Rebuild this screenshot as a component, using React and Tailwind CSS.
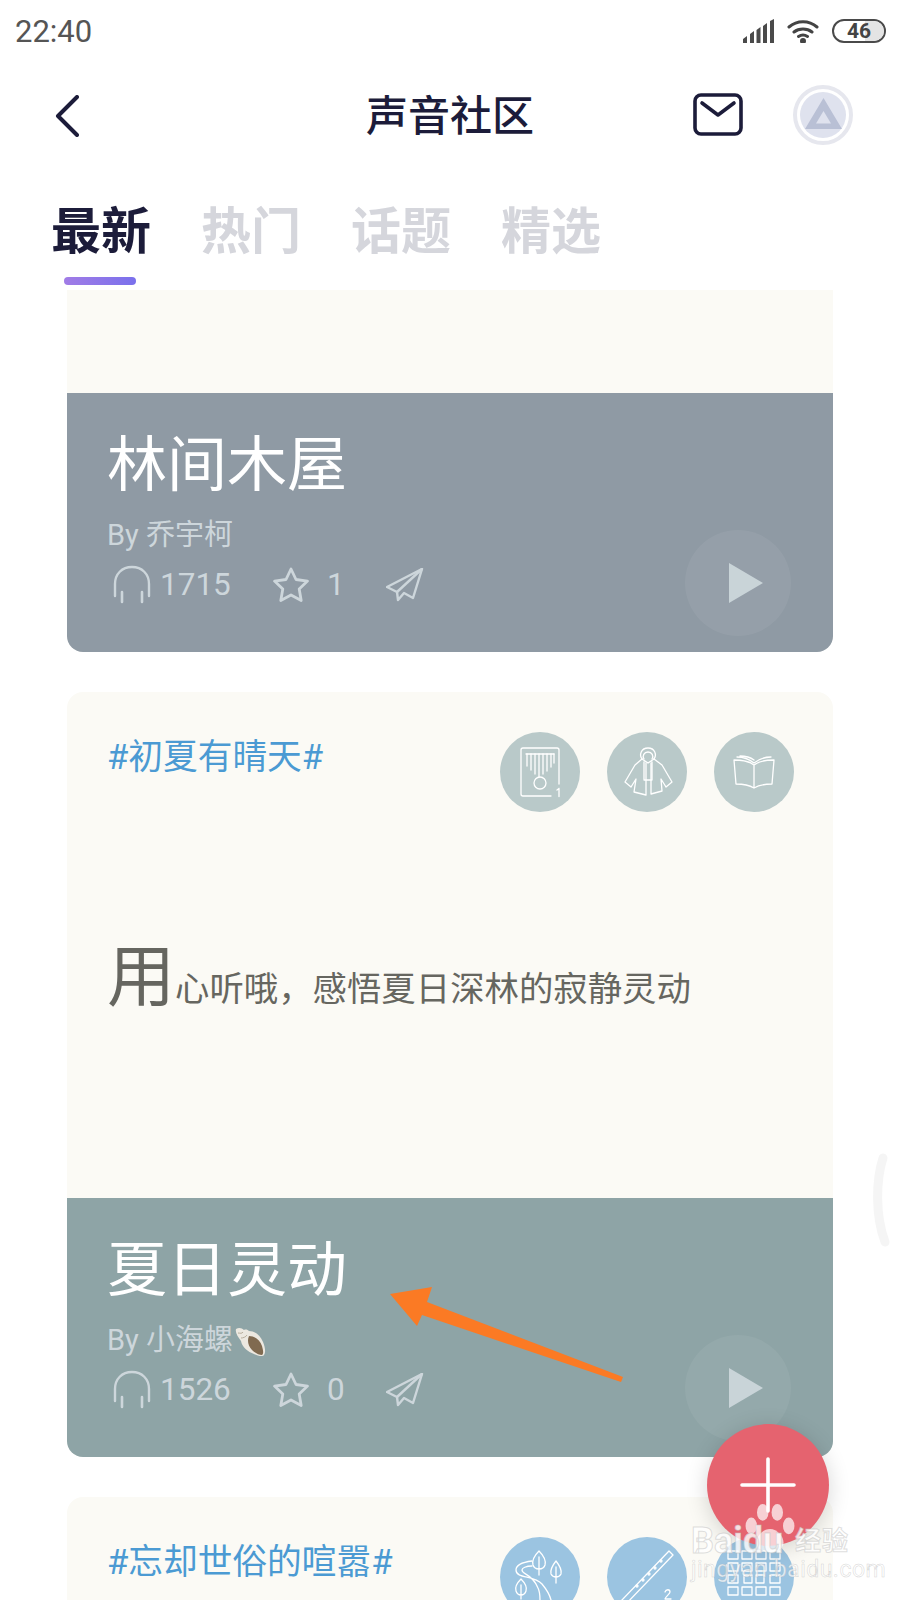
import React from "react";

const Headphones = () => (
  <svg width="38" height="40" viewBox="0 0 38 40" fill="none" stroke="currentColor" strokeWidth="2.400" strokeLinecap="round">
    <path d="M2 31V19C2 9 9 2 19 2s17 7 17 17v12" />
    <path d="M9 27v10M29 27v10" strokeWidth="2.600" />
  </svg>
);
const Star = () => (
  <svg width="38" height="38" viewBox="0 0 38 38" fill="none" stroke="currentColor" strokeWidth="2.800" strokeLinejoin="round">
    <path d="M19 3l5 10.500 11.500 1.600-8.300 8 2 11.400L19 29l-10.200 5.500 2-11.400-8.300-8L14 13.500z" />
  </svg>
);
const Plane = () => (
  <svg width="38" height="34" viewBox="0 0 38 34" fill="none" stroke="currentColor" strokeWidth="2.400" strokeLinejoin="round">
    <path d="M36 1L1 19l10 5 1 8 6-7 9 5z" />
    <path d="M36 1L11 24" />
  </svg>
);

const Kalimba = () => (
  <>
    <path d="M51 64H23a2 2 0 0 1-2-2V18a2 2 0 0 1 2-2h34a2 2 0 0 1 2 2v34" />
    <path d="M26 22h28" />
    <path d="M27 22v12M31 22v16M35 22v20M39 22v23M43 22v20M47 22v17M51 22v13M54 22v9" />
    <circle cx="40" cy="51" r="6" />
    <path d="M59 56.500v8M57 58l2-1.500" />
  </>
);
const Coat = () => (
  <>
    <path d="M35 27c-3-4-1-11 6-11s9 7 6 11" />
    <path d="M37 27c-2-3 0-7 4-7s6 4 4 7" />
    <path d="M35 27l-7 6-10 17 6 5 5-8-2 13 12 3V31M47 27l8 6 10 17-6 5-5-8 1 12-11 3V31" />
    <path d="M37 30v18h8V30M35 27l6 4 6-4" />
  </>
);
const Book = () => (
  <>
    <path d="M40 33c-5-4-13-5-20-5l2 24c7 0 13 1 18 4 5-3 11-4 18-4l2-24c-7 0-15 1-20 5zM40 33v23" />
    <path d="M23 25c6 0 12 2 17 6 5-4 11-6 17-6M26 24c5 0 10 1 14 4" />
  </>
);
const Forest = () => (
  <>
    <path d="M39 14c-5 5-7 10-6 14 1 3 4 4 6 4s5-1 6-4c1-4-1-9-6-14zM39 20v18" />
    <path d="M56 24c-4 5-6 9-5 13 1 2 3 3 5 3s4-1 5-3c1-4-1-8-5-13zM56 30v16" />
    <path d="M21 42c-4 4-6 9-5 12 1 3 3 4 5 4s4-1 5-4c1-3-1-8-5-12zM21 48v14" />
    <path d="M32 24c-8 1-16 3-16 9 0 9 18 5 26 14 5 6 8 12 9 16M32 29c-6 0-10 2-10 4 0 5 10 3 16 18 2 4 2 8 2 12" />
  </>
);
const Flute = () => (
  <>
    <path d="M14 64L62 14l4 4-48 50z" />
    <circle cx="30" cy="49" r="1" /><circle cx="36" cy="43" r="1" /><circle cx="42" cy="37" r="1" /><circle cx="48" cy="31" r="1" /><circle cx="54" cy="24" r="1" />
    <path d="M58 55c1-3 5-3 5 0 0 2-4 4-5 7h6" />
  </>
);
const Panel = () => (
  <>
    <path d="M14 14h10v8H14zM28 14h10v8H28zM42 14h10v8H42zM56 14h10v8H56zM14 26h10v8H14zM28 26h10v8H28zM42 26h10v8H42zM56 26h10v8H56zM14 38h10v8H14zM30 38h8v8h-8zM42 38h8v8h-8zM56 38h10v8H56zM14 50h10v8H14zM28 50h10v8H28zM42 50h10v8H42zM56 50h10v8H56z" />
  </>
);

function Badge({ color, children }) {
  return (
    <div className={`w-[80px] h-[80px] rounded-full shrink-0 ${color}`}>
      <svg width="80" height="80" viewBox="0 0 80 80" fill="none" stroke="white" strokeWidth="1.300" strokeLinejoin="round" strokeLinecap="round">
        {children}
      </svg>
    </div>
  );
}

function CardHead({ topic, color, icons }) {
  return (
    <div className="flex items-start justify-between pt-[40px] pl-[40px] pr-[39px]">
      <div className="text-[34.700px] leading-[50px] text-[#4b9ad3]">{topic}</div>
      <div className="flex gap-[27px]">
        {icons.map((I, i) => (
          <Badge key={i} color={color}><I /></Badge>
        ))}
      </div>
    </div>
  );
}

const Shell = () => (
  <svg className="ml-[2px] mt-[4px]" width="31" height="30" viewBox="0 0 31 30">
    <path d="M1 2c3-2 6-1 8 1 2-1 4 0 5 1 6 0 11 4 14 11 2 5 3 10 1 13-1 2-6 1-10-1-6-2-12-7-13-13C3 10 0 6 1 2z" fill="#ece8e0" />
    <path d="M14 9c6 0 11 4 13 10 1 4 2 7 0 9-3 0-7-2-10-5-4-4-5-10-3-14z" fill="#806a50" />
    <path d="M3 6c2 0 4 1 5-1M6 11c2 0 5-1 6-3" stroke="#b7ad9c" strokeWidth="1" fill="none" />
  </svg>
);

function Band({ color, title, by, shell, plays, stars }) {
  return (
    <div className={`h-[259px] flex justify-between items-end rounded-b-[16px] ${color}`}>
      <div className="pl-[40px] self-start text-[#cdd6db]">
        <div className="pt-[37px] text-[60px] leading-[72px] text-white">{title}</div>
        <div className="mt-[15px] flex items-center h-[36px] text-[29px] leading-[36px]">
          <span>{by}</span>
          {shell && <Shell />}
        </div>
        <div className="mt-[12px] flex items-center h-[40px] text-[31.500px]">
          <div className="ml-[6px] w-[38px]"><Headphones /></div>
          <div className="ml-[9px] w-[112px]">{plays}</div>
          <div className="w-[37px]"><Star /></div>
          <div className="ml-[18px] w-[59px]">{stars}</div>
          <Plane />
        </div>
      </div>
      <div className="mb-[16px] mr-[42px] w-[106px] h-[106px] rounded-full bg-white/[0.06] flex items-center justify-center">
        <svg className="ml-[16px]" width="34" height="40" viewBox="0 0 34 40"><path d="M0 0l34 20L0 40z" fill="#c9d4d8" /></svg>
      </div>
    </div>
  );
}

export default function App() {
  return (
    <div className="relative w-[900px] h-[1600px] overflow-hidden bg-white font-['Roboto','Noto_Sans_CJK_SC',sans-serif]">
      {/* status bar */}
      <div className="h-[62px] flex items-center justify-between pl-[15px] pr-[14px] text-[#555]">
        <span className="text-[31px] leading-none">22:40</span>
        <div className="flex items-center gap-[13px]">
          <svg width="31" height="24" viewBox="0 0 31 24" fill="#4a4a4a">
            <path d="M0 20l4-3v7H0zM7 15l4-3v12H7zM13.500 11l4-3v16h-4zM20 7l4-3v20h-4zM27 2l4-2v24h-4z" />
          </svg>
          <svg width="32" height="24" viewBox="0 0 32 24" fill="none" stroke="#444" strokeWidth="3" strokeLinecap="round">
            <path d="M2 8c8-7 20-7 28 0M7 13c5-4 13-4 18 0M11.500 17.500c3-2 6-2 9 0" />
            <circle cx="16" cy="22" r="1.500" fill="#444" />
          </svg>
          <div className="relative w-[54px] h-[24px] rounded-full border-[2.500px] border-[#4a4a4a] overflow-hidden flex items-center justify-center text-[21px] font-bold text-[#444] leading-none">
            <div className="absolute right-0 top-0 bottom-0 w-[19px] bg-[#e4e4e4]" />
            <span className="relative">46</span>
          </div>
        </div>
      </div>

      {/* nav */}
      <div className="h-[108px] grid grid-cols-[1fr_auto_1fr] items-center pl-[47px] pr-[47px]">
        <svg className="ml-[8px]" width="24" height="42" viewBox="0 0 24 42" fill="none" stroke="#1c1c3a" strokeWidth="4" strokeLinecap="round" strokeLinejoin="round">
          <path d="M22 2L3 21l19 19" />
        </svg>
        <div className="mt-[2px] text-[42px] leading-none font-medium text-[#1c1c3a]">声音社区</div>
        <div className="flex items-start justify-end gap-[50px] -mt-[2px]">
          <svg className="mt-[8px]" width="50" height="43" viewBox="0 0 50 43" fill="none" stroke="#1c1c3a" strokeWidth="3.600" strokeLinejoin="round" strokeLinecap="round">
            <rect x="2" y="2" width="46" height="39" rx="6" />
            <path d="M9 10l16 12 16-12" />
          </svg>
          <div className="w-[60px] h-[60px] rounded-full bg-white border-[4px] border-[#e6e7ee] flex items-center justify-center">
            <div className="w-[46px] h-[46px] rounded-full bg-[#dfe2ee] flex items-start justify-center">
              <svg className="mt-[6px]" width="37" height="31" viewBox="0 0 37 31">
                <path d="M18.500 0L37 31H0z" fill="#b9c0d5" />
                <path d="M18.500 13l7.500 12.500H11z" fill="#dfe2ee" />
              </svg>
            </div>
          </div>
        </div>
      </div>

      {/* tabs */}
      <div className="pt-[32px] pl-[51px] flex gap-[50px] text-[50px] leading-[60px] font-bold text-[#d5d6dc]">
        <span className="text-[#1c1c3a]">最新</span>
        <span>热门</span>
        <span>话题</span>
        <span>精选</span>
      </div>
      <div className="mt-[15px] ml-[64px] w-[72px] h-[8px] rounded-full bg-gradient-to-r from-[#a17ce6] to-[#7a70ec]" />

      {/* list */}
      <div className="mt-[5px] mx-[67px] flex flex-col gap-[40px]">
        <div className="bg-[#fbfaf5] rounded-b-[16px]">
          <div className="h-[103px]" />
          <Band color="bg-[#8f9aa4]" title="林间木屋" by="By 乔宇柯" plays="1715" stars="1" />
        </div>

        <div className="bg-[#fbfaf5] rounded-[16px]">
          <div className="h-[506px]">
            <CardHead topic="#初夏有晴天#" color="bg-[#b9c9c9]" icons={[Kalimba, Coat, Book]} />
            <div className="mt-[121px] pl-[40px] flex items-baseline text-[#666660] text-[34.400px] leading-[90px]">
              <span className="text-[68px]">用</span>
              <span>心听哦，感悟夏日深林的寂静灵动</span>
            </div>
          </div>
          <Band color="bg-[#8ea4a6]" title="夏日灵动" by="By 小海螺" shell plays="1526" stars="0" />
        </div>

        <div className="bg-[#fbfaf5] rounded-[16px] h-[300px]">
          <CardHead topic="#忘却世俗的喧嚣#" color="bg-[#9bc4e1]" icons={[Forest, Flute, Panel]} />
        </div>
      </div>

      {/* edge handle */}
      <svg className="absolute left-[867px] top-[1150px]" width="26" height="100" viewBox="0 0 26 100" fill="none">
        <path d="M16 8C9 30 8 65 18 92" stroke="#f5f5f5" strokeWidth="9" strokeLinecap="round" />
      </svg>

      {/* annotation arrow */}
      <svg className="absolute left-[385px] top-[1280px]" width="245" height="110" viewBox="0 0 245 110">
        <path d="M5 14L47 7 42 22 238 97 236 102 37 35 32 46z" fill="#fb7a24" />
      </svg>

      {/* FAB */}
      <div className="absolute left-[707px] top-[1424px] w-[122px] h-[122px] rounded-full bg-[#e5636f] shadow-[0_4px_22px_rgba(0,0,0,0.16)] flex items-center justify-center">
        <svg width="56" height="56" viewBox="0 0 56 56" stroke="white" strokeWidth="3.600" strokeLinecap="round">
          <path d="M28 2v52M2 28h52" />
        </svg>
      </div>

      {/* watermark */}
      <div className="absolute left-[691px] top-[1502px] w-[165px] text-white">
        <svg className="ml-[53px]" width="52" height="52" viewBox="0 0 50 50" fill="#fff" fillOpacity="0.7">
          <ellipse cx="7" cy="23" rx="5.500" ry="8" />
          <ellipse cx="18" cy="10" rx="5.500" ry="8" />
          <ellipse cx="32" cy="10" rx="5.500" ry="8" />
          <ellipse cx="43" cy="23" rx="5.500" ry="8" />
          <path d="M25 26c-7 0-13 7-13 13 0 6 6 9 13 9s13-3 13-9c0-6-6-13-13-13z" />
        </svg>
      </div>
      <div className="absolute left-[691px] top-[1524px] flex items-center h-[34px] text-white/80 text-[36px] font-bold leading-none [-webkit-text-stroke:1px_rgba(190,190,190,0.5)]">
        <span className="w-[104px]">Baidu</span>
        <span className="text-[26px] tracking-[1px]">经验</span>
      </div>
      <div className="absolute left-[691px] top-[1560px] text-[23px] leading-[20px] tracking-[0.5px] text-white/70 [-webkit-text-stroke:0.5px_rgba(170,170,170,0.5)]">jingyan.baidu.com</div>
    </div>
  );
}
